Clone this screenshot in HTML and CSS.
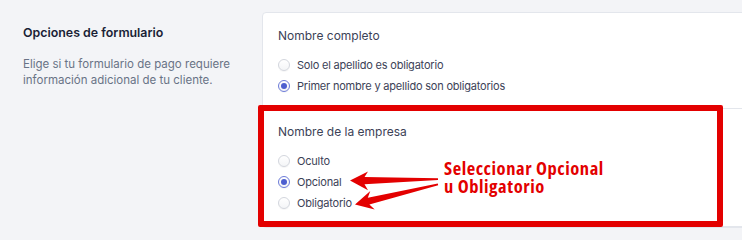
FILE: index.html
```html
<!DOCTYPE html>
<html lang="es">
<head>
<meta charset="utf-8">
<title>Opciones de formulario</title>
<link rel="stylesheet" href="styles.css">
</head>
<body>
<div class="page">
  <aside class="aside">
    <h2 class="aside-title">Opciones de formulario</h2>
    <p class="aside-desc">Elige si tu formulario de pago requiere información adicional de tu cliente.</p>
  </aside>
  <div class="card">
    <section class="group">
      <div class="group-label">Nombre completo</div>
      <div class="radios">
        <label class="radio"><span class="dot"></span><span>Solo el apellido es obligatorio</span></label>
        <label class="radio"><span class="dot checked"></span><span>Primer nombre y apellido son obligatorios</span></label>
      </div>
    </section>
    <section class="group">
      <div class="group-label">Nombre de la empresa</div>
      <div class="radios">
        <label class="radio"><span class="dot"></span><span>Oculto</span></label>
        <label class="radio"><span class="dot checked"></span><span>Opcional</span></label>
        <label class="radio"><span class="dot"></span><span>Obligatorio</span></label>
      </div>
    </section>
  </div>
</div>
<div class="annotation">
  <div class="highlight"></div>
  <div class="note">
    <div class="note-line">Seleccionar Opcional</div>
    <div class="note-line">u Obligatorio</div>
  </div>
  <svg class="arrows" width="742" height="229" viewBox="0 0 742 229">
    <polygon points="350,180.5 368,171.5 364.5,177 438,178.3 438,179.9 364.5,184.2 368,190.2" fill="#e30000"/>
    <polygon points="355,204.5 370.3,191.1 367.8,197.8 437.8,183.6 438.2,185.2 369.4,204.6 374.7,209.5" fill="#e30000"/>
  </svg>
</div>
</body>
</html>
```

FILE: styles.css
```css
* { box-sizing: border-box; }
html, body {
  margin: 0;
  padding: 0;
  background: #f3f4f7;
  overflow: hidden;
}
body {
  width: 742px;
  height: 229px;
  position: relative;
  font-family: Inter, "Noto Sans", sans-serif;
  color: #3c4257;
}
.page {
  display: flex;
  padding-top: 12px;
}
.aside {
  width: 262px;
  flex: none;
  padding: 0 23px;
}
.aside-title {
  margin: 13px 0 0;
  font-size: 12.4px;
  line-height: 16px;
  font-weight: 600;
  color: #1a1f36;
}
.aside-desc {
  margin: 15px 0 0;
  font-size: 11.5px;
  line-height: 16px;
  color: #697386;
}
.card {
  flex: none;
  width: 520px;
  background: #fff;
  border: 1px solid #e3e6ec;
  border-radius: 4px;
}
.group {
  padding: 15px 15px 12px;
  border-bottom: 1px solid #e3e6ec;
}
.group + .group {
  padding-bottom: 13px;
}
.group-label {
  font-size: 12px;
  line-height: 16px;
  color: #3c4257;
}
.radios {
  display: flex;
  flex-direction: column;
  margin-top: 10px;
}
.radio {
  display: flex;
  align-items: center;
  gap: 7px;
  height: 21px;
  font-size: 11px;
  letter-spacing: -0.2px;
  color: #3c4257;
}
.dot {
  width: 12px;
  height: 12px;
  border-radius: 50%;
  border: 1px solid #d3d6dd;
  background: linear-gradient(#fff, #f4f5f7);
  box-shadow: 0 1px 1px rgba(0,0,0,0.04);
  display: flex;
  align-items: center;
  justify-content: center;
}
.dot.checked {
  border-color: #6c7bd8;
}
.dot.checked::after {
  content: "";
  width: 6px;
  height: 6px;
  border-radius: 50%;
  background: #4d5fcf;
}
.annotation {
  position: absolute;
  left: 0;
  top: 0;
  width: 742px;
  height: 229px;
  pointer-events: none;
}
.highlight {
  position: absolute;
  left: 258px;
  top: 105px;
  width: 465px;
  height: 122px;
  border: 6px solid #e30000;
  border-radius: 2px;
}
.note {
  position: absolute;
  left: 444px;
  top: 159px;
  display: flex;
  flex-direction: column;
  font-family: "Open Sans", sans-serif;
  font-stretch: 75%;
  font-weight: 700;
  font-size: 18.5px;
  letter-spacing: 0.55px;
  color: #e30000;
}
.note-line {
  height: 18px;
  line-height: 18px;
}
.arrows {
  position: absolute;
  left: 0;
  top: 0;
}
```
